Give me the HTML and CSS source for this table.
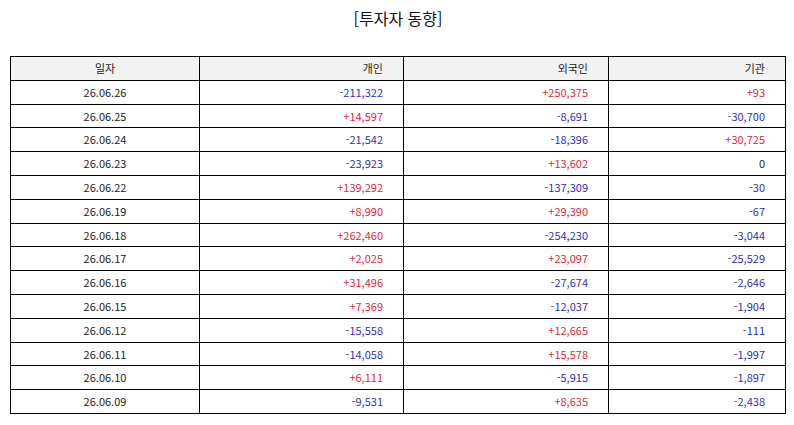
FILE: index.html
```html
<!DOCTYPE html>
<html lang="ko">
<head>
<meta charset="utf-8">
<link rel="stylesheet" href="styles.css">
</head>
<body>
<div class="page">
  <h1 class="title">[투자자 동향]</h1>
  <div class="table">
    <div class="cell head center">일자</div><div class="cell head">개인</div><div class="cell head">외국인</div><div class="cell head">기관</div>
    <div class="cell center">26.06.26</div><div class="cell neg">-211,322</div><div class="cell pos">+250,375</div><div class="cell pos">+93</div>
    <div class="cell center">26.06.25</div><div class="cell pos">+14,597</div><div class="cell neg">-8,691</div><div class="cell neg">-30,700</div>
    <div class="cell center">26.06.24</div><div class="cell neg">-21,542</div><div class="cell neg">-18,396</div><div class="cell pos">+30,725</div>
    <div class="cell center">26.06.23</div><div class="cell neg">-23,923</div><div class="cell pos">+13,602</div><div class="cell zero">0</div>
    <div class="cell center">26.06.22</div><div class="cell pos">+139,292</div><div class="cell neg">-137,309</div><div class="cell neg">-30</div>
    <div class="cell center">26.06.19</div><div class="cell pos">+8,990</div><div class="cell pos">+29,390</div><div class="cell neg">-67</div>
    <div class="cell center">26.06.18</div><div class="cell pos">+262,460</div><div class="cell neg">-254,230</div><div class="cell neg">-3,044</div>
    <div class="cell center">26.06.17</div><div class="cell pos">+2,025</div><div class="cell pos">+23,097</div><div class="cell neg">-25,529</div>
    <div class="cell center">26.06.16</div><div class="cell pos">+31,496</div><div class="cell neg">-27,674</div><div class="cell neg">-2,646</div>
    <div class="cell center">26.06.15</div><div class="cell pos">+7,369</div><div class="cell neg">-12,037</div><div class="cell neg">-1,904</div>
    <div class="cell center">26.06.12</div><div class="cell neg">-15,558</div><div class="cell pos">+12,665</div><div class="cell neg">-111</div>
    <div class="cell center">26.06.11</div><div class="cell neg">-14,058</div><div class="cell pos">+15,578</div><div class="cell neg">-1,997</div>
    <div class="cell center">26.06.10</div><div class="cell pos">+6,111</div><div class="cell neg">-5,915</div><div class="cell neg">-1,897</div>
    <div class="cell center">26.06.09</div><div class="cell neg">-9,531</div><div class="cell pos">+8,635</div><div class="cell neg">-2,438</div>
  </div>
</div>
</body>
</html>
```
FILE: styles.css
```css
html, body {
  margin: 0;
  padding: 0;
  background: #ffffff;
}
.page {
  width: 794px;
  height: 425px;
  padding: 0 0 0 10px;
  box-sizing: border-box;
  font-family: "Noto Sans CJK KR", "Noto Sans", sans-serif;
  color: #222;
}
.title {
  margin: 0;
  padding-top: 6px;
  height: 56px;
  box-sizing: border-box;
  width: 776px;
  text-align: center;
  font-size: 16px;
  font-weight: 400;
  line-height: 24px;
  color: #111;
}
.table {
  display: grid;
  grid-template-columns: 188px 203px 204px 176px;
  grid-auto-rows: 22.8px;
  gap: 1px;
  background: #000;
  border: 1px solid #000;
  width: 774px;
}
.cell {
  background: #fff;
  font-size: 11px;
  line-height: 22.8px;
  text-align: right;
  padding-right: 20px;
  white-space: nowrap;
  color: #222;
}
.cell.head {
  background: #f2f2f2;
  color: #222;
}
.cell.center {
  text-align: center;
  padding-right: 0;
}
.pos { color: #e0283a; }
.neg { color: #3030c0; }
.zero { color: #222; }
```
